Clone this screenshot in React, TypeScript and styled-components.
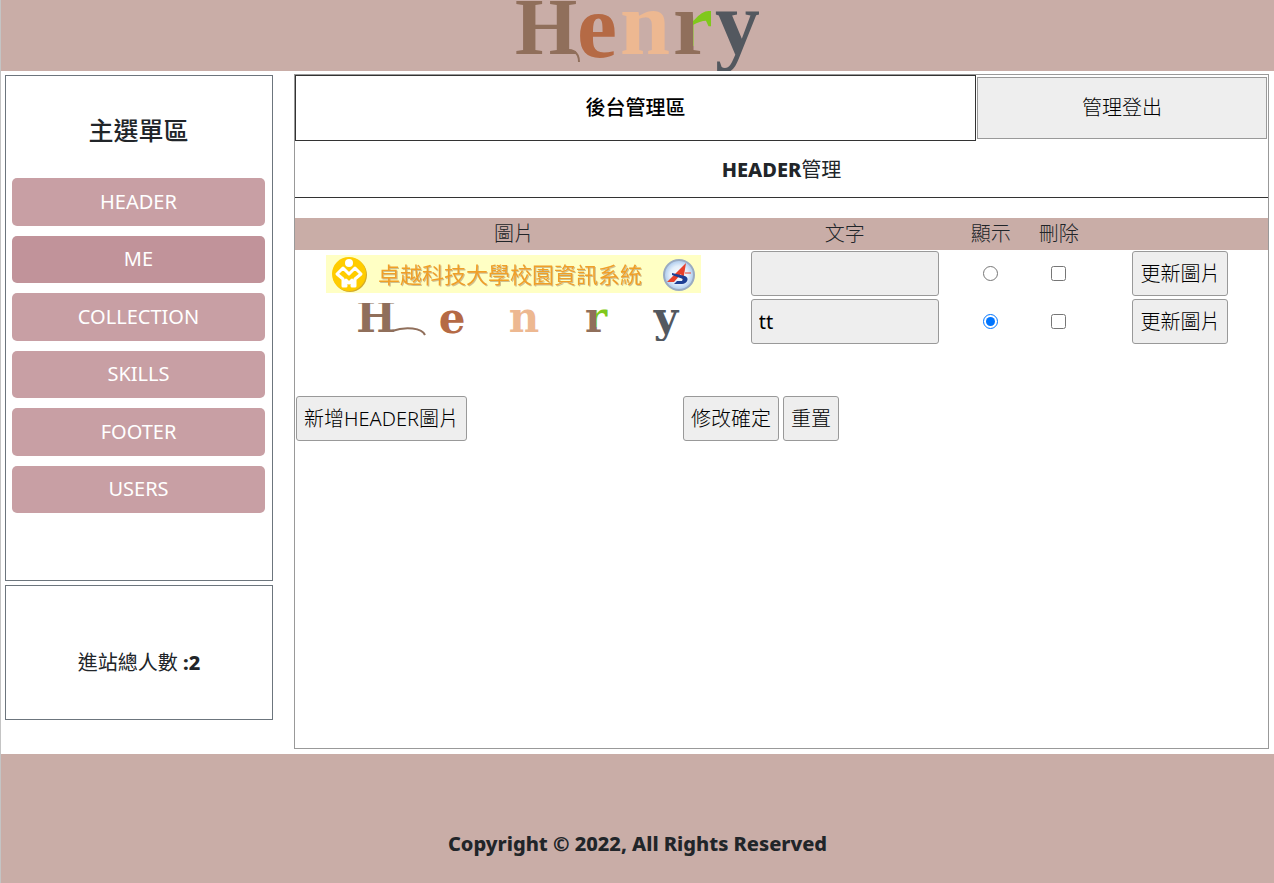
import React, { useState } from "react";
import styled, { createGlobalStyle } from "styled-components";

const ROSE = "#c9ada7";
const INK = "#212529";
const FONT = '"Noto Sans", "Noto Sans CJK TC", sans-serif';

const GlobalStyle = createGlobalStyle`
  *, *::before, *::after { box-sizing: border-box; }
  body {
    margin: 0;
    background: #fff;
    color: ${INK};
    font-family: ${FONT};
    font-size: 20px;
    line-height: 30px;
  }
  h1, h2, h3, p { margin: 0; font-size: inherit; }
`;

const Page = styled.div`
  display: flex;
  flex-direction: column;
  min-height: 100vh;
  border-left: 1px solid #c4c4c4;
`;

const Banner = styled.header`
  display: flex;
  justify-content: center;
  background: ${ROSE};
`;

const Body = styled.div`
  display: grid;
  grid-template-columns: minmax(0, 268fr) minmax(0, 975fr);
  gap: 21px;
  padding: 3px 5px 5px 4px;
`;

const Sidebar = styled.aside`
  display: flex;
  flex-direction: column;
  gap: 4px;
  padding-top: 1px;
`;

const SideBox = styled.section`
  border: 1px solid #6c757d;
  text-align: center;
`;

const MenuBox = styled(SideBox)`
  padding: 39px 7px 67px 6px;
`;

const VisitorBox = styled(SideBox)`
  padding: 62px 8px 41px;
  font-weight: 800;
`;

const Regular = styled.span`
  font-weight: 400;
`;

const MenuTitle = styled.h2`
  margin-bottom: 33px;
  font-size: 25px;
  font-weight: 500;
`;

const Menu = styled.nav`
  display: grid;
  grid-auto-rows: 1fr;
  gap: 10px;
  min-height: 335px;
`;

const MenuLink = styled.a<{ $active?: boolean }>`
  display: flex;
  align-items: center;
  justify-content: center;
  border-radius: 5px;
  background: ${(p) => (p.$active ? "#c1939a" : "#c89fa4")};
  color: #fff;
  text-decoration: none;
`;

const Panel = styled.main`
  min-height: 675px;
  border: 1px solid #999;
`;

const TopRow = styled.div`
  display: flex;
`;

const AreaTitle = styled.h1`
  flex: 0 0 70%;
  padding: 17px 0;
  border: 1px solid #333;
  color: #000;
  font-weight: 500;
  text-align: center;
`;

const Button = styled.button`
  height: 45px;
  padding: 0 7px;
  border: 1px solid #999;
  border-radius: 3px;
  background: #eee;
  color: #000;
  font: inherit;
  font-weight: 300;
  white-space: nowrap;
`;

const LogoutButton = styled(Button)`
  flex: 1;
  height: auto;
  margin: 2px 1px;
  border-radius: 0;
`;

const PageTitle = styled.h2`
  margin-bottom: 20px;
  padding: 14px 0 12px;
  border-bottom: 1px solid #333;
  font-weight: 800;
  text-align: center;
`;

const Table = styled.table`
  width: 100%;
  border-collapse: collapse;
  table-layout: fixed;
  text-align: center;
`;

const HeadCell = styled.th<{ $width: string }>`
  width: ${(p) => p.$width};
  height: 32px;
  padding: 0;
  background: ${ROSE};
  font-weight: 300;
`;

const Cell = styled.td`
  height: 48px;
  padding: 0 0 1px;
  vertical-align: middle;

  > * { vertical-align: middle; }
`;

const TextInput = styled.input`
  width: 84%;
  height: 45px;
  padding: 0 7px;
  border: 1px solid #999;
  border-radius: 3px;
  background: #eee;
  color: #000;
  font: inherit;
`;

const Tick = styled.input`
  display: block;
  width: 15px;
  height: 15px;
  margin: 0 auto;
`;

const Actions = styled.div`
  display: grid;
  grid-template-columns: 200fr 531fr 242fr;
  margin-top: 50px;
  padding-left: 1px;
`;

const ActionGroup = styled.div<{ $center?: boolean }>`
  display: flex;
  gap: 4px;
  justify-content: ${(p) => (p.$center ? "center" : "flex-start")};
`;

const Footer = styled.footer`
  flex: 1;
  padding: 75px 0 24px;
  background: ${ROSE};
  font-weight: 800;
  text-align: center;
`;

const Art = styled.svg`
  display: inline-block;
  flex: none;
  overflow: hidden;
`;

function HenryLogo() {
  return (
    <Art width="243" height="71" viewBox="0 0 243 71" role="img" aria-label="Henry">
      <defs>
        <pattern id="logo-r" width="243" height="71" patternUnits="userSpaceOnUse">
          <rect width="243" height="71" fill="#906f5b" />
          <rect x="177" width="66" height="46" fill="#80c81c" />
        </pattern>
      </defs>
      <g fontFamily="Liberation Serif, serif" fontWeight="700" fontSize="90">
        <text x="-1" y="54" fontSize="80" fill="#906f5b">H</text>
        <text x="61" y="57" fill="#b56a45">e</text>
        <text x="104" y="54" fill="#edb891">n</text>
        <text x="157" y="54" fill="url(#logo-r)">r</text>
        <text x="199" y="54" fill="#53585f">y</text>
      </g>
      <path d="M46 53C54 47 63 51 63 62" fill="none" stroke="#906f5b" strokeWidth="2" />
    </Art>
  );
}

function HenryThumb() {
  return (
    <Art width="375" height="38" viewBox="0 0 375 38" role="img" aria-label="Henry">
      <defs>
        <pattern id="thumb-r" width="375" height="38" patternUnits="userSpaceOnUse">
          <rect width="375" height="38" fill="#906f5b" />
          <rect x="270" width="105" height="24" fill="#80c81c" />
        </pattern>
      </defs>
      <g fontFamily="DejaVu Serif, serif" fontWeight="700" fontSize="42" textAnchor="middle">
        <text x="50" y="29" fill="#906f5b">H</text>
        <text x="126" y="30" fill="#b56a45">e</text>
        <text x="198" y="29" fill="#edb891">n</text>
        <text x="270" y="29" fill="url(#thumb-r)">r</text>
        <text x="340" y="29" fill="#53585f">y</text>
      </g>
      <path d="M66 28C80 23 96 25 99 32" fill="none" stroke="#906f5b" strokeWidth="2" />
    </Art>
  );
}

function SchoolThumb() {
  return (
    <Art width="375" height="38" viewBox="0 0 375 38" role="img" aria-label="卓越科技大學校園資訊系統">
      <defs>
        <radialGradient id="badge">
          <stop offset="0" stopColor="#fff" />
          <stop offset="0.6" stopColor="#e4effb" />
          <stop offset="1" stopColor="#a9c8ec" />
        </radialGradient>
        <filter id="letter-shadow">
          <feDropShadow dx="1" dy="1" stdDeviation="0" floodColor="#b9a77a" floodOpacity="0.7" />
        </filter>
      </defs>
      <rect width="375" height="38" fill="#ffffc4" />
      <circle cx="24" cy="20" r="17" fill="#d3ab2c" />
      <circle cx="23" cy="19" r="17" fill="#fc0" />
      <circle cx="23" cy="8" r="4" fill="#fff" />
      <path
        d="M11 19l6-6 6 6 6-6 6 6-6 5v7h-3v-6l-3 3-3-3v6h-3v-7z"
        fill="#fc0"
        stroke="#fff"
        strokeWidth="3"
        strokeLinejoin="round"
      />
      <text
        x="52"
        y="28"
        fill="#f0a028"
        fontFamily="Noto Sans CJK TC, sans-serif"
        fontSize="22"
        fontWeight="400"
        filter="url(#letter-shadow)"
      >
        卓越科技大學校園資訊系統
      </text>
      <circle cx="353" cy="20" r="15" fill="url(#badge)" stroke="#9aabc2" strokeWidth="2" />
      <path d="M360 8L341 27h7l7-8 2 7z" fill="#e8402a" />
      <path d="M346 18l13 3c5 2 2 8-3 8h-8l3-3h5l1-2-11-4z" fill="#1d3f94" />
      <path d="M359 18h6" stroke="#e8402a" />
    </Art>
  );
}

const menu = ["HEADER", "ME", "COLLECTION", "SKILLS", "FOOTER", "USERS"];

const images = [
  { id: 1, text: "", Picture: SchoolThumb },
  { id: 2, text: "tt", Picture: HenryThumb },
];

export default function App() {
  const [shown, setShown] = useState(2);

  return (
    <>
      <GlobalStyle />
      <Page>
        <Banner>
          <HenryLogo />
        </Banner>
        <Body>
          <Sidebar>
            <MenuBox>
              <MenuTitle>主選單區</MenuTitle>
              <Menu>
                {menu.map((name) => (
                  <MenuLink key={name} href={`#${name.toLowerCase()}`} $active={name === "ME"}>
                    {name}
                  </MenuLink>
                ))}
              </Menu>
            </MenuBox>
            <VisitorBox>
              <Regular>進站總人數</Regular> :2
            </VisitorBox>
          </Sidebar>
          <Panel>
            <TopRow>
              <AreaTitle>後台管理區</AreaTitle>
              <LogoutButton type="button">管理登出</LogoutButton>
            </TopRow>
            <PageTitle>
              HEADER<Regular>管理</Regular>
            </PageTitle>
            <form onSubmit={(e) => e.preventDefault()}>
              <Table>
                <thead>
                  <tr>
                    <HeadCell $width="45%">圖片</HeadCell>
                    <HeadCell $width="23%">文字</HeadCell>
                    <HeadCell $width="7%">顯示</HeadCell>
                    <HeadCell $width="7%">刪除</HeadCell>
                    <HeadCell $width="18%" />
                  </tr>
                </thead>
                <tbody>
                  {images.map(({ id, text, Picture }) => (
                    <tr key={id}>
                      <Cell>
                        <Picture />
                      </Cell>
                      <Cell>
                        <TextInput type="text" aria-label="文字" defaultValue={text} />
                      </Cell>
                      <Cell>
                        <Tick
                          type="radio"
                          name="shown"
                          aria-label="顯示"
                          checked={shown === id}
                          onChange={() => setShown(id)}
                        />
                      </Cell>
                      <Cell>
                        <Tick type="checkbox" aria-label="刪除" />
                      </Cell>
                      <Cell>
                        <Button type="button">更新圖片</Button>
                      </Cell>
                    </tr>
                  ))}
                </tbody>
              </Table>
              <Actions>
                <ActionGroup>
                  <Button type="button">新增HEADER圖片</Button>
                </ActionGroup>
                <ActionGroup $center>
                  <Button type="submit">修改確定</Button>
                  <Button type="reset">重置</Button>
                </ActionGroup>
              </Actions>
            </form>
          </Panel>
        </Body>
        <Footer>Copyright © 2022, All Rights Reserved</Footer>
      </Page>
    </>
  );
}
